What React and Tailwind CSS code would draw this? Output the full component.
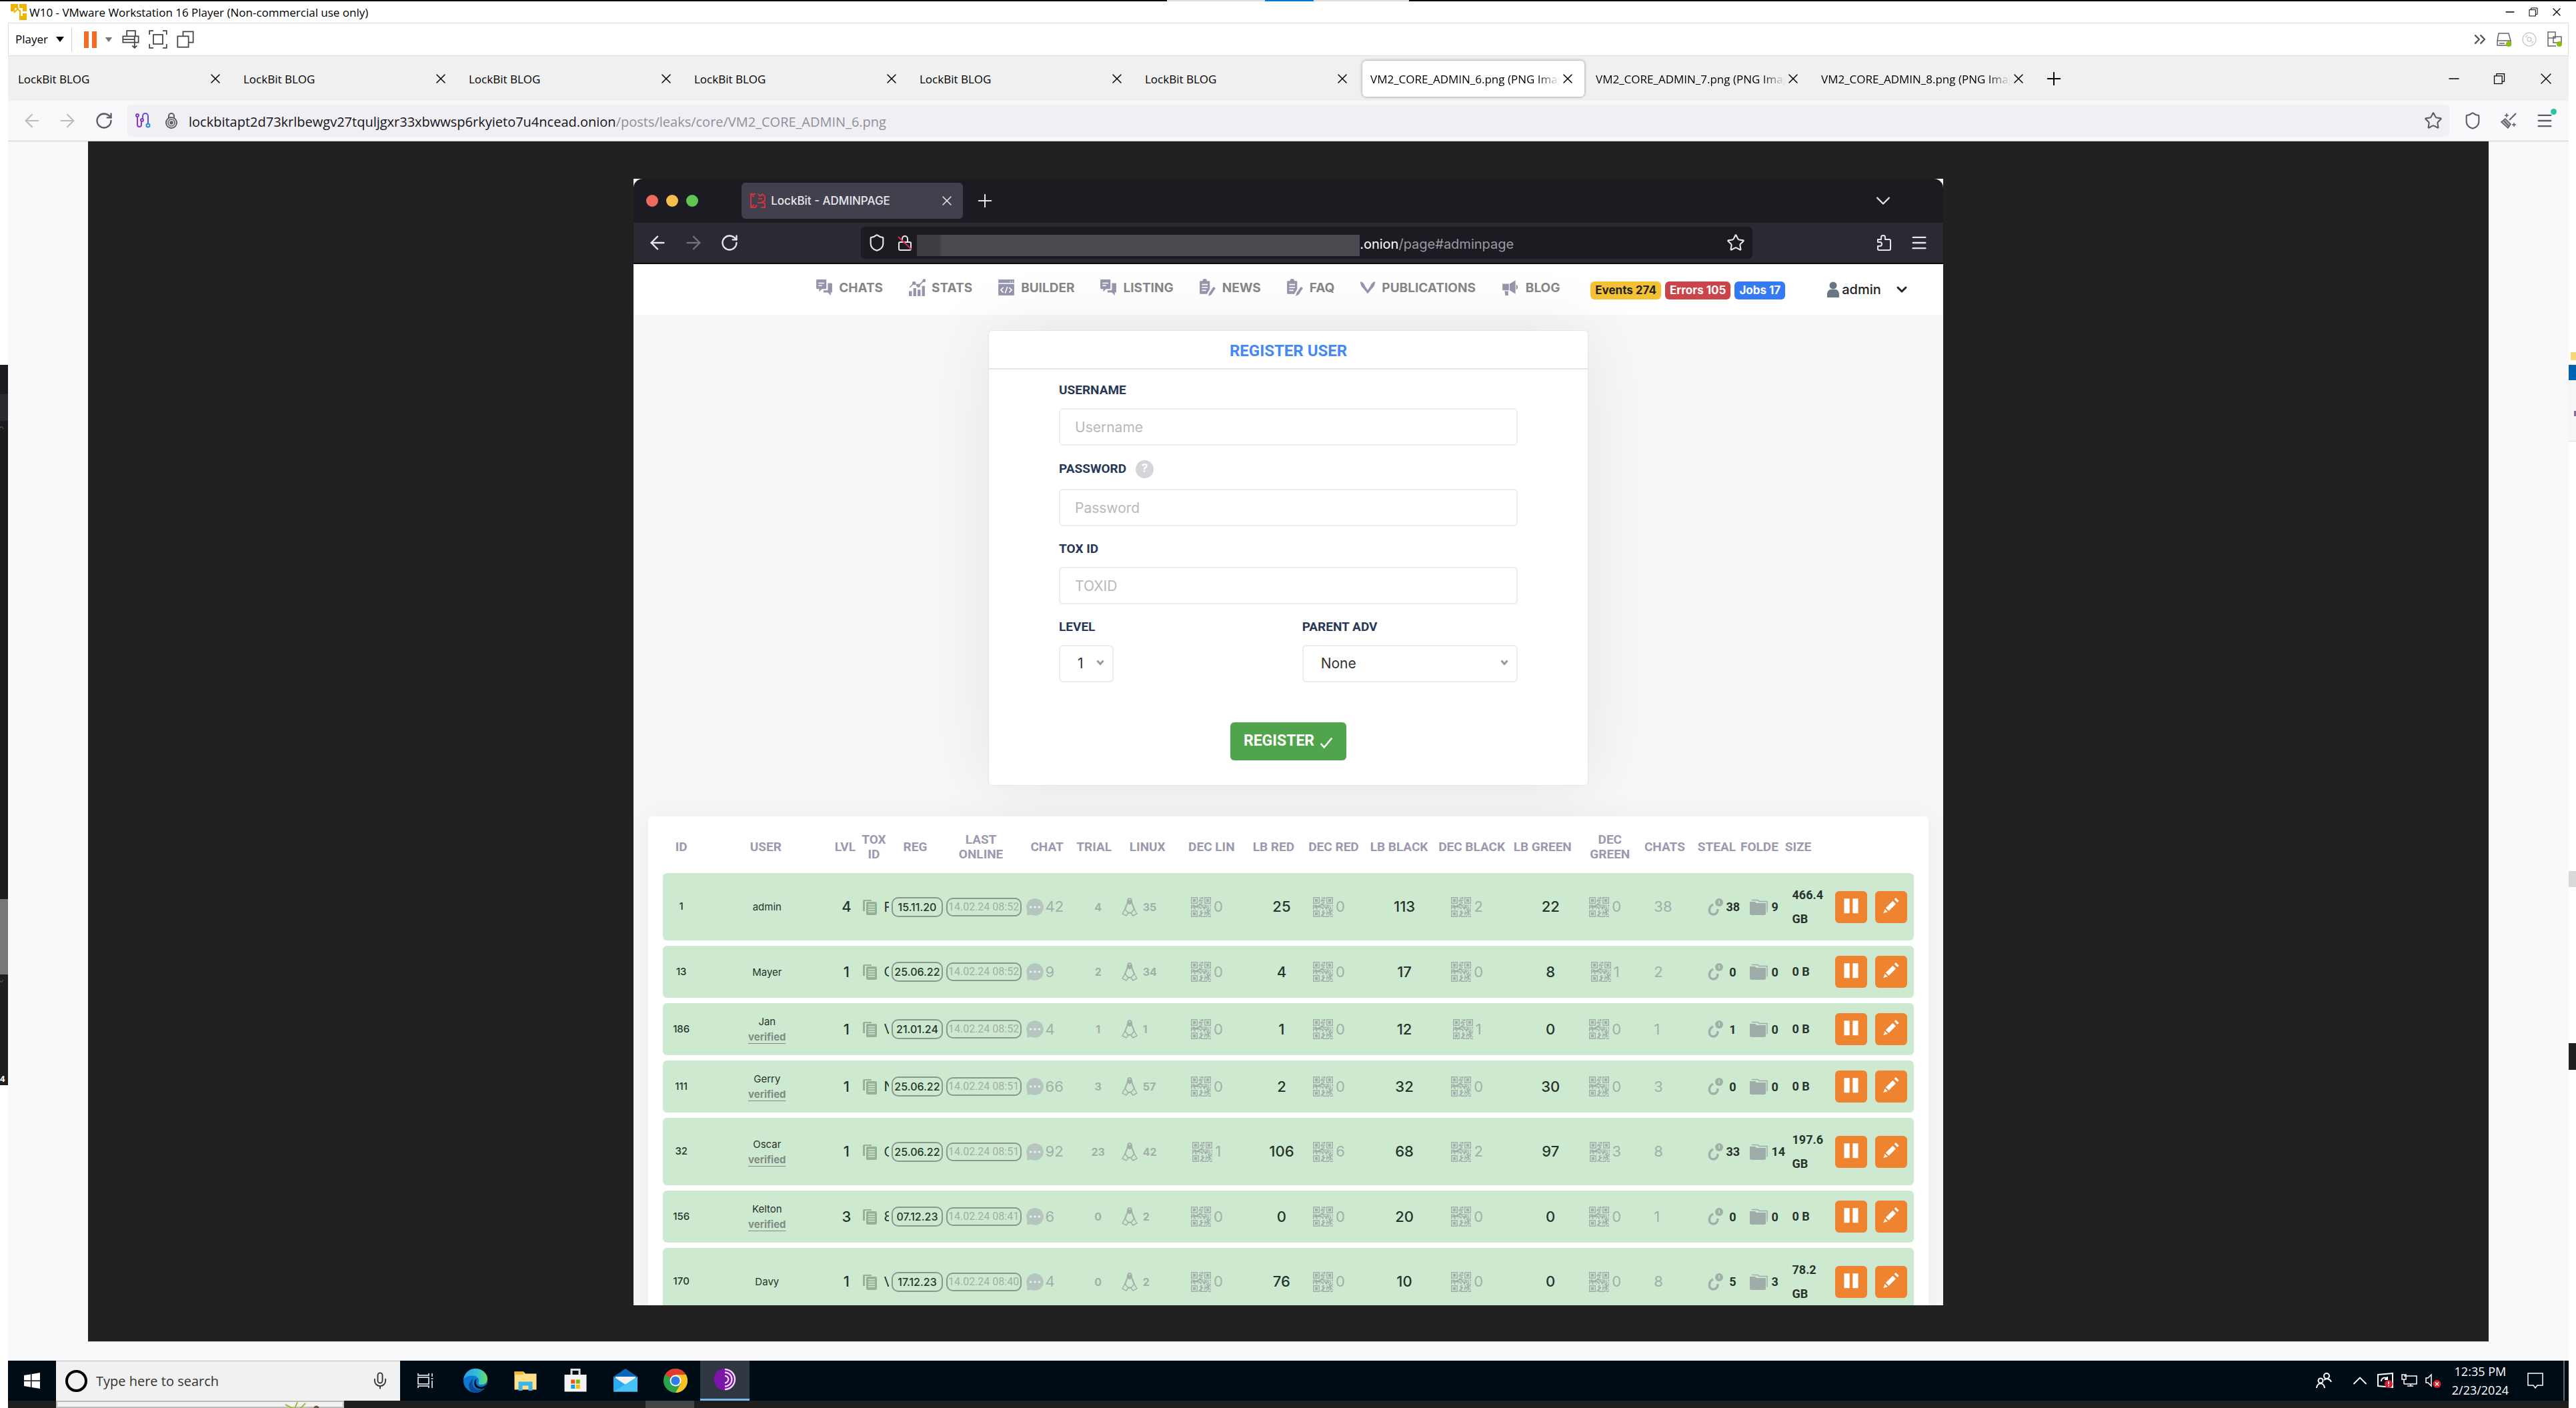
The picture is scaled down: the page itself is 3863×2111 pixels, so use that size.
import React from "react";
import {
  Star, Shield, RotateCw, ArrowLeft, ArrowRight, X, Plus, Minus, Menu,
  ChevronDown, ChevronUp, ChevronsRight, Mic,
} from "lucide-react";

const S = ({ className, vb = "0 0 24 24", children }) => (
  <svg className={className} viewBox={vb} fill="none" stroke="currentColor" strokeWidth="1.5" aria-hidden="true">
    {children}
  </svg>
);

/* ---------- window chrome icons ---------- */
const VmLogo = () => (
  <S className="size-6 text-[#f0b400]">
    <path d="M1 4V1h9v4H5v5H1zM14 1h9v9h-4V5h-5zM19 15h4v8h-9v-4h5zM5 13l7-7M9 6l6 6M14 9v11" fill="currentColor" stroke="currentColor" strokeWidth="2" />
  </S>
);
const Restore = ({ className }) => (
  <S className={className}>
    <rect x="3" y="7" width="14" height="14" />
    <path d="M7 7V3h14v14h-4" />
  </S>
);
const SendKeys = () => (
  <S className="h-7 w-7 text-[#444]">
    <path d="M7 1h11v7H7zM2 8h20v8H2zM2 12h15M17 8v15M14 20l3 3 3-3" />
  </S>
);
const FullScreen = () => (
  <S className="h-7 w-7 text-[#444]">
    <path d="M6 1H1v5M18 1h5v5M6 23H1v-5M18 23h5v-5" />
    <rect x="6" y="6" width="12" height="12" />
  </S>
);
const Unity = () => (
  <S className="h-7 w-7 text-[#444]">
    <path d="M9 8V2h13v14h-6" />
    <rect x="2" y="8" width="14" height="14" />
  </S>
);
const Drive = () => (
  <S className="size-6 text-[#666]">
    <path d="M4 3h15l3 11v7H2v-7zM2 14h20M5 18h8" />
    <circle cx="19" cy="19" r="4" fill="#7ac70c" stroke="none" />
  </S>
);
const Disc = () => (
  <S className="size-6 text-[#ccc]">
    <circle cx="12" cy="12" r="10" />
    <circle cx="12" cy="12" r="3" />
    <path d="M6 9l3-3M15 18l3-3" />
  </S>
);
const Net = () => (
  <S className="size-6 text-[#666]">
    <path d="M2 1h11v9H2zM10 8h12v9H10zM2 10v12h12" />
    <circle cx="19" cy="19" r="4" fill="#7ac70c" stroke="none" />
  </S>
);
const Circuit = () => (
  <S className="size-6">
    <g stroke="#8a35c9" strokeWidth="2">
      <circle cx="3" cy="4" r="2" />
      <path d="M3 6v12a3 3 0 0 0 6 0v-5" />
      <circle cx="10" cy="11" r="2" />
    </g>
    <path d="M11 9V5a4 4 0 0 1 8 0v11" stroke="#5a55d6" strokeWidth="2" />
    <circle cx="19" cy="19" r="2.500" stroke="#2a8bd0" strokeWidth="2" />
  </S>
);
const OnionLock = () => (
  <S className="size-6 text-[#5b5b66]">
    <path d="M8 8V5a4 4 0 0 1 8 0v3" strokeWidth="2" />
    <circle cx="12" cy="15" r="8" strokeWidth="2" />
    <circle cx="12" cy="15" r="5" />
    <circle cx="12" cy="15" r="2" fill="currentColor" />
  </S>
);
const Broom = () => (
  <S className="size-6 text-[#5b5b66]">
    <path d="M23 1L13 11" strokeWidth="2" />
    <path d="M7 9l8 8-4 6L1 14zM5 12l7 8" fill="currentColor" fillOpacity="0.5" />
    <path d="M9 1v6M6 4h6M20 15v6M17 18h6" />
  </S>
);
const PuzzleIcon = () => (
  <S className="size-6">
    <path d="M3 7h5V4a3 3 0 0 1 6 0v3h6a2 2 0 0 1 2 2v12a2 2 0 0 1-2 2H5a2 2 0 0 1-2-2v-4h3a3 3 0 0 0 0-6H3z" strokeWidth="2" strokeLinejoin="round" />
  </S>
);

/* ---------- admin page icons ---------- */
const ChatsIcon = () => (
  <S className="size-[26px] text-[#9594ad]">
    <path d="M2 1h12a1 1 0 0 1 1 1v11a1 1 0 0 1-1 1H9l-4 4v-4H2a1 1 0 0 1-1-1V2a1 1 0 0 1 1-1z" fill="currentColor" stroke="none" />
    <path d="M17 6h5a1 1 0 0 1 1 1v11a1 1 0 0 1-1 1h-1v4l-4-4h-6v-3h6z" fill="currentColor" stroke="none" />
    <path d="M4 6h8M4 9.500h5" stroke="#fff" />
  </S>
);
const StatsIcon = () => (
  <S className="size-[26px] text-[#9594ad]">
    <path d="M1 17h4v7H1zM7 13h4v11H7zM13 15h4v9h-4zM19 10h4v14h-4z" fill="currentColor" stroke="none" />
    <path d="M2 12l6-6 6 4 8-8" strokeWidth="1.500" />
    <circle cx="8" cy="6" r="1.800" fill="currentColor" />
    <circle cx="14" cy="9.500" r="1.800" fill="currentColor" />
    <circle cx="22" cy="2.500" r="1.500" fill="currentColor" />
  </S>
);
const BuilderIcon = () => (
  <S className="size-[26px] text-[#9594ad]">
    <path d="M1 1h22v22H1z" fill="currentColor" stroke="none" />
    <path d="M1 6.500h22M13.500 11l-3 9M8 12l-3.500 3.500L8 19M16 12l3.500 3.500L16 19M17 4h1M20 4h1" stroke="#fff" />
  </S>
);
const NewsIcon = () => (
  <S className="size-[26px] text-[#9594ad]">
    <path d="M2 3h3a3 3 0 0 1 6 0h3a1 1 0 0 1 1 1v10l-4 7H2a1 1 0 0 1-1-1V4a1 1 0 0 1 1-1z" fill="currentColor" stroke="none" />
    <path d="M4 8h8M4 12h8M4 16h6" stroke="#fff" />
    <path d="M20 11l3 2-6 9-4 2 1-4z" fill="currentColor" stroke="none" />
  </S>
);
const PubIcon = () => (
  <S className="size-6 text-[#9594ad]">
    <path d="M1 3c4 1 6 4 7 7l6 9-2 2-7-8C2 10 1 7 1 3z" fill="currentColor" stroke="none" />
    <path d="M23 3c-4 1-6 4-7 7l-6 9 2 2 7-8c3-3 4-6 4-10z" fill="currentColor" stroke="none" />
  </S>
);
const BlogIcon = () => (
  <S className="h-[26px] w-7 text-[#9594ad]">
    <path d="M1 7h9v9H1zM11 7l8-5v19l-8-5zM20 8c3 1 3 6 0 7zM4 17h5v6H5z" fill="currentColor" stroke="none" />
  </S>
);
const UserIcon = () => (
  <S className="h-6 w-5 text-[#6b7684]" vb="0 0 20 24">
    <circle cx="10" cy="6" r="5.500" fill="currentColor" stroke="none" />
    <path d="M1 24v-5c0-4 3-7 5-7h8c2 0 5 3 5 7v5z" fill="currentColor" stroke="none" />
  </S>
);
const BrandHex = () => (
  <S className="size-6 text-[#d0323f]">
    <path d="M9 2H2v20h8M2 2l5 4M2 22l5-4M13 2l3 3 3-3 4 3v7l-4 2 4 2v6h-6M13 9h6M12 15h7M10 18v4" strokeWidth="2" />
  </S>
);
const CopyStack = () => (
  <S className="size-6 text-[#95b198]">
    <path d="M1 18V3a2 2 0 0 1 2-2h11v2H4v15z" fill="currentColor" stroke="none" />
    <rect x="6" y="4" width="16" height="20" rx="2" fill="currentColor" stroke="none" />
    <path d="M9 8.500h10M9 12h10M9 15.500h10M9 19h10" stroke="#cdead1" />
  </S>
);
const Bubble = () => (
  <S className="size-7 shrink-0 text-[#b5c5bf]">
    <circle cx="12" cy="12" r="11" fill="currentColor" stroke="none" />
    <path d="M2 14v9l9-2z" fill="currentColor" stroke="none" />
    <g fill="#e4f3e6" stroke="none">
      <circle cx="6.500" cy="12" r="1.500" />
      <circle cx="12" cy="12" r="1.500" />
      <circle cx="17.500" cy="12" r="1.500" />
    </g>
  </S>
);
const Penguin = () => (
  <S className="h-7 w-6 text-[#a1aea9]" vb="0 0 24 28">
    <path d="M12 1C9.500 1 9 3 9 6c0 4-4 8-4 13 0 5 14 5 14 0 0-5-4-9-4-13 0-3-.5-5-3-5z" strokeWidth="2" />
    <path d="M9 3.500h6v5l-3 2-3-2z" fill="currentColor" stroke="none" />
    <path d="M5 17l-4 7 6 3 3-4zM19 17l4 7-6 3-3-4z" fill="#cdead1" />
  </S>
);
const Steal = () => (
  <S className="h-7 w-6 shrink-0 text-[#a1aea9]" vb="0 0 24 28">
    <circle cx="18" cy="7" r="6" fill="currentColor" stroke="none" />
    <path d="M18 4v5" stroke="#cdead1" />
    <path d="M9 10c-8 4-7 15 0 15 5 0 7-4 7-8" strokeWidth="3.500" />
  </S>
);
const Folders = () => (
  <S className="h-6 w-7 shrink-0 text-[#9fadaa]" vb="0 0 28 24">
    <path d="M0 4h8l2 2h14v16a2 2 0 0 1-2 2H2a2 2 0 0 1-2-2z" fill="currentColor" stroke="none" />
    <path d="M3 1.500h9l2 2h12v16" />
  </S>
);

/* Module map of the QR glyph: three finder squares plus a scattered data pattern. */
const qrPath = (() => {
  const n = 21;
  let d = "";
  let seed = 7;
  const finder = (r, c) => {
    const y = r < 7 ? r : r - 14;
    const x = c < 7 ? c : c - 14;
    const ring = Math.max(Math.abs(x - 3), Math.abs(y - 3));
    return ring === 3 || ring <= 1;
  };
  for (let r = 0; r < n; r++) {
    for (let c = 0; c < n; c++) {
      seed = (seed * 1103 + 12347) % 65521;
      const corner = (r < 7 && (c < 7 || c >= 14)) || (r >= 14 && c < 7);
      const quiet = !corner && ((r < 8 && (c < 8 || c > 12)) || (r > 12 && c < 8));
      const on = corner ? finder(r, c) : !quiet && seed % 100 < 52;
      if (on) d += `M${c} ${r}h1v1h-1z`;
    }
  }
  return d;
})();
const QrIcon = () => (
  <svg className="size-[30px] shrink-0" viewBox="0 0 21 21" fill="currentColor" aria-hidden="true"><path d={qrPath} /></svg>
);
const Caret = () => (
  <svg className="pointer-events-none absolute top-[22px] right-[14px] h-[9px] w-3" viewBox="0 0 12 9" fill="none" stroke="#999" strokeWidth="3" aria-hidden="true"><path d="M1.500 1.500L6 6.500l4.500-5" /></svg>
);

/* ---------- shared pieces ---------- */
const IconButton = ({ label, className = "", children }) => (
  <button type="button" aria-label={label} className={`flex items-center justify-center ${className}`}>{children}</button>
);

const tabs = [
  "LockBit BLOG", "LockBit BLOG", "LockBit BLOG", "LockBit BLOG", "LockBit BLOG", "LockBit BLOG",
  "VM2_CORE_ADMIN_6.png (PNG Image)", "VM2_CORE_ADMIN_7.png (PNG Image)", "VM2_CORE_ADMIN_8.png (PNG Image)",
];

const nav = [
  ["CHATS", ChatsIcon], ["STATS", StatsIcon], ["BUILDER", BuilderIcon], ["LISTING", ChatsIcon],
  ["NEWS", NewsIcon], ["FAQ", NewsIcon], ["PUBLICATIONS", PubIcon], ["BLOG", BlogIcon],
];

const columns = [
  ["ID", "w-[55px]"], ["USER", "w-[198px]"], ["LVL", "w-[40px]"], ["TOX ID", "w-[46px]"], ["REG", "w-[82px] pr-1"],
  ["LAST ONLINE", "w-[119px] pr-6 pl-4"], ["CHAT", "w-[71px]"], ["TRIAL", "w-[74px] pr-1"], ["LINUX", "w-[82px]"],
  ["DEC LIN", "w-[110px]"], ["LB RED", "w-[84px] pr-2"], ["DEC RED", "w-[88px]"], ["LB BLACK", "w-[108px]"],
  ["DEC BLACK", "w-[110px]"], ["LB GREEN", "w-[110px] pr-2"], ["DEC GREEN", "w-[84px]"], ["CHATS", "w-[84px] pr-1"],
  ["STEAL", "w-[68px]"], ["FOLDE", "w-[64px] pr-1"], ["SIZE", "w-[72px] pr-6"], ["", "w-[125px]"],
];

const users = [
  [1, "admin", 0, 4, "F", "15.11.20", "14.02.24 08:52", 42, 4, 35, 0, 25, 0, 113, 2, 22, 0, 38, 38, 9, "466.4 GB"],
  [13, "Mayer", 0, 1, "C", "25.06.22", "14.02.24 08:52", 9, 2, 34, 0, 4, 0, 17, 0, 8, 1, 2, 0, 0, "0 B"],
  [186, "Jan", 1, 1, "V", "21.01.24", "14.02.24 08:52", 4, 1, 1, 0, 1, 0, 12, 1, 0, 0, 1, 1, 0, "0 B"],
  [111, "Gerry", 1, 1, "N", "25.06.22", "14.02.24 08:51", 66, 3, 57, 0, 2, 0, 32, 0, 30, 0, 3, 0, 0, "0 B"],
  [32, "Oscar", 1, 1, "C", "25.06.22", "14.02.24 08:51", 92, 23, 42, 1, 106, 6, 68, 2, 97, 3, 8, 33, 14, "197.6 GB"],
  [156, "Kelton", 1, 3, "8", "07.12.23", "14.02.24 08:41", 6, 0, 2, 0, 0, 0, 20, 0, 0, 0, 1, 0, 0, "0 B"],
  [170, "Davy", 0, 1, "V", "17.12.23", "14.02.24 08:40", 4, 0, 2, 0, 76, 0, 10, 0, 0, 0, 8, 5, 3, "78.2 GB"],
];

const Qr = ({ n }) => (
  <td className="pr-[14px]">
    <div className="flex items-center justify-center gap-1 text-[22px] text-[#a1aea9]">
      <QrIcon />
      <span>{n}</span>
    </div>
  </td>
);
const Big = ({ n }) => <td className="pl-4 text-center text-[22px] font-medium text-[#26332c]">{n}</td>;

function UserRow({ u }) {
  const [id, name, ver, lvl, tox, reg, last, chat, trial, linux, dl, lr, dr, lb, db, lg, dg, chats, steal, folder, size] = u;
  return (
    <tr className={`[&>td]:bg-[#cdead1] ${size.endsWith("GB") ? "h-[101px]" : "h-[78px]"}`}>
      <td className="rounded-l-md text-center text-[15px] font-medium text-[#26332c]">{id}</td>
      <td className="pl-1 text-center text-[15px] leading-[23px] text-[#26332c]">
        <div>{name}</div>
        {ver ? <a href="#verified" className="font-bold text-[#808c84] underline underline-offset-4">verified</a> : null}
      </td>
      <td className="pl-1 text-center text-[22px] font-medium text-[#26332c]">{lvl}</td>
      <td>
        <div className="flex items-center gap-2 overflow-hidden pl-[6px] text-[20px] text-[#26332c]">
          <IconButton label={`Copy TOX ID of ${name}`} className="shrink-0"><CopyStack /></IconButton>
          <span className="w-2 shrink-0 overflow-hidden">{tox}</span>
        </div>
      </td>
      <td className="pr-[2px] pl-1">
        <div className="flex h-[30px] items-center justify-center rounded-[10px] border-2 border-[#89998d] text-[16px] font-medium whitespace-nowrap text-[#26332c]">{reg}</div>
      </td>
      <td className="px-[3px]">
        <div className="flex h-7 items-center justify-center rounded-[10px] border-2 border-[#89998d] font-[Roboto,sans-serif] text-[16px] whitespace-nowrap text-[#a1aea9]">{last}</div>
      </td>
      <td>
        <div className="flex items-center gap-[2px] pl-[3px] text-[22px] text-[#a1aea9]"><Bubble />{chat}</div>
      </td>
      <td className="pl-2 text-center text-[16px] font-bold text-[#a1aea9]">{trial}</td>
      <td>
        <div className="flex items-center gap-2 pl-[2px] text-[16px] leading-5 font-bold text-[#a1aea9]"><Penguin /><span>{linux}</span></div>
      </td>
      <Qr n={dl} />
      <Big n={lr} />
      <Qr n={dr} />
      <Big n={lb} />
      <Qr n={db} />
      <Big n={lg} />
      <Qr n={dg} />
      <td className="pl-6 text-[22px] text-[#a1aea9]">{chats}</td>
      <td>
        <div className="flex items-center justify-between pl-5 font-[Roboto,sans-serif] text-[18px] font-bold text-[#26332c]"><Steal /><span className="w-5 text-center">{steal}</span></div>
      </td>
      <td>
        <div className="flex items-center gap-1 pl-4 font-[Roboto,sans-serif] text-[18px] font-bold text-[#26332c]"><Folders />{folder}</div>
      </td>
      <td className="pl-[15px] font-[Roboto,sans-serif] text-[18px] leading-9 font-bold text-[#26332c]">{size}</td>
      <td className="rounded-r-md">
        <div className="flex gap-3 pl-[7px]">
          <IconButton label={`Pause ${name}`} className="size-12 rounded-md bg-[#ee842f]">
            <S className="size-7 text-white"><path d="M3 1h7v19H3zM14 1h7v19h-7z" fill="currentColor" stroke="none" /></S>
          </IconButton>
          <IconButton label={`Edit ${name}`} className="size-12 rounded-md bg-[#ee842f]">
            <S className="size-7 text-white">
              <path d="M14 4l4 4L9 17l-4-4zM16 2l2-2 4 4-2 2zM4 14.500l3.500 3.500L2 20z" fill="currentColor" stroke="none" />
            </S>
          </IconButton>
        </div>
      </td>
    </tr>
  );
}

const label = "font-[Roboto,sans-serif] text-[19px] leading-[22px] font-bold text-[#273857]";
const field = "h-14 w-full rounded-md border-2 border-[#ececef] bg-white text-[21px] text-[#333] placeholder:text-[#b9b9b9]";

function RegisterCard() {
  return (
    <section className="mx-auto mt-[23px] w-full max-w-[900px] rounded-md border border-[#e3e4f0] bg-white shadow-[0_0_110px_rgba(0,0,0,0.08)]">
      <h1 className="border-b-2 border-[#e3e4f0] pt-4 pb-3 text-center font-[Roboto,sans-serif] text-[24px] leading-7 font-bold text-[#4488f5]">REGISTER USER</h1>
      <form className="px-[105px] pt-5 pb-[37px]">
        <div className="mb-[23px]">
          <label htmlFor="username" className={`${label} mb-4 block`}>USERNAME</label>
          <input id="username" placeholder="Username" className={`${field} pl-[22px]`} />
        </div>
        <div className="mb-[23px]">
          <div className="mb-[18px] flex h-6 items-center gap-[14px]">
            <label htmlFor="password" className={label}>PASSWORD</label>
            <button type="button" className="flex size-[27px] items-center justify-center rounded-full bg-[#d5d5da] text-[17px] font-bold text-white">?</button>
          </div>
          <input id="password" type="password" placeholder="Password" className={`${field} pl-[22px]`} />
        </div>
        <div className="mb-[23px]">
          <label htmlFor="tox" className={`${label} mb-4 block`}>TOX ID</label>
          <input id="tox" placeholder="TOXID" className={`${field} pl-[22px]`} />
        </div>
        <div className="flex justify-between">
          <div>
            <label htmlFor="level" className={`${label} mb-4 block`}>LEVEL</label>
            <div className="relative w-[82px]">
              <select id="level" defaultValue="1" className={`${field} appearance-none pl-[26px]`}><option>1</option></select>
              <Caret />
            </div>
          </div>
          <div className="w-[47%]">
            <label htmlFor="parent" className={`${label} mb-4 block`}>PARENT ADV</label>
            <div className="relative">
              <select id="parent" defaultValue="None" className={`${field} appearance-none pl-[26px]`}><option>None</option></select>
              <Caret />
            </div>
          </div>
        </div>
        <button type="button" className="mx-auto mt-[60px] flex h-[57px] items-center gap-2 rounded-md bg-[#50a44c] px-5 font-[Roboto,sans-serif] text-[23px] font-bold text-white">
          REGISTER
          <S className="mt-1 size-5"><path d="M2 13l6 7L22 3" strokeWidth="3" /></S>
        </button>
      </form>
    </section>
  );
}

function AdminWindow() {
  return (
    <div className="mx-auto mt-14 aspect-[1964/1689] w-6/11 overflow-hidden bg-[#f7f7f7] font-[Inter,sans-serif]">
      <div className="flex h-[66px] items-center rounded-t-[14px] bg-[#1c1b22] px-[19px] text-[#e8e8ec]">
        <div className="mr-[65px] flex gap-3">
          <span className="size-[18px] rounded-full bg-[#ec6a5e]" />
          <span className="size-[18px] rounded-full bg-[#f5bf4f]" />
          <span className="size-[18px] rounded-full bg-[#61c554]" />
        </div>
        <div className="flex h-[54px] w-[332px] items-center gap-2 rounded-md bg-[#42404c] px-3">
          <BrandHex />
          <span className="flex-1 pt-[2px] text-[17px] font-medium">LockBit - ADMINPAGE</span>
          <IconButton label="Close tab"><X className="size-6" strokeWidth={1.5} /></IconButton>
        </div>
        <IconButton label="New tab" className="ml-[17px]"><Plus className="size-8" strokeWidth={1.5} /></IconButton>
        <IconButton label="List all tabs" className="mr-[53px] ml-auto"><ChevronDown className="size-9" strokeWidth={1.5} /></IconButton>
      </div>
      <div className="flex h-[62px] items-center border-b-2 border-[#0c0c0d] bg-[#2b2a33] pr-[22px] pl-5 text-[#e8e8ec]">
        <IconButton label="Back"><ArrowLeft className="size-8" strokeWidth={1.8} /></IconButton>
        <IconButton label="Forward" className="ml-[22px] text-[#72717a]"><ArrowRight className="size-8" strokeWidth={1.8} /></IconButton>
        <IconButton label="Reload" className="ml-6"><RotateCw className="size-7" strokeWidth={2} /></IconButton>
        <div className="mr-[185px] ml-[183px] flex h-12 flex-1 items-center rounded-md bg-[#1c1b22] pr-[11px] pl-[10px]">
          <Shield className="size-7" strokeWidth={1.8} />
          <S className="ml-4 size-6">
            <rect x="3" y="11" width="18" height="12" rx="2" strokeWidth="2" />
            <path d="M8 11V6a4 4 0 0 1 8 0v5" strokeWidth="2" />
            <path d="M2 3l20 19" stroke="#e22850" strokeWidth="2" />
          </S>
          <span className="mt-2 ml-[6px] h-8 w-[36px] bg-[#3f3e45]" />
          <span className="mt-2 h-8 w-[628px] bg-[#4b4a50]" />
          <span className="pt-1 text-[20px] text-[#9b9aa2]"><span className="text-white">.onion</span>/page#adminpage</span>
          <IconButton label="Bookmark" className="ml-auto"><Star className="size-7" strokeWidth={1.8} /></IconButton>
        </div>
        <IconButton label="Extensions"><PuzzleIcon /></IconButton>
        <IconButton label="Menu" className="ml-[27px]"><Menu className="size-7" strokeWidth={2} /></IconButton>
      </div>
      <header className="flex h-[76px] items-center bg-white pr-[50px] pb-1 pl-[273px]">
        <nav className="flex gap-[38px] pb-[2px]">
          {nav.map(([t, I]) => (
            <a key={t} href={`#${t.toLowerCase()}`} className="flex items-center gap-[9px] text-[19px] font-bold text-[#858588]"><I /><span className="pt-[2px]">{t}</span></a>
          ))}
        </nav>
        <div className="ml-auto flex gap-[6px] pt-[6px] text-[17px] leading-[27px] font-bold text-white">
          <span className="rounded-md bg-[#f4c132] px-[7px] text-[#222]">Events 274</span>
          <span className="rounded-md bg-[#cb444a] px-[7px]">Errors 105</span>
          <span className="rounded-md bg-[#347af6] px-[7px]">Jobs 17</span>
        </div>
        <button type="button" className="ml-[62px] flex items-center gap-[3px] pt-1 text-[20px] font-medium text-[#222]">
          <UserIcon />admin<ChevronDown className="ml-4 size-6" strokeWidth={3} />
        </button>
      </header>
      <RegisterCard />
      <section className="mx-[22px] mt-[46px] rounded-t-md bg-white px-[22px] shadow-[0_0_40px_rgba(0,0,0,0.05)]">
        <table className="w-full table-fixed border-separate border-spacing-x-0 border-spacing-y-2">
          <thead>
            <tr className="h-[69px]">
              {columns.map(([c, w], i) => (
                <th key={i} className={`${w} pt-[6px] pb-0 text-center font-[Roboto,sans-serif] text-[19px] leading-[22px] font-bold text-[#9a99ae]`}>{c}</th>
              ))}
            </tr>
          </thead>
          <tbody>{users.map((u) => <UserRow key={u[0]} u={u} />)}</tbody>
        </table>
      </section>
    </div>
  );
}

/* ---------- taskbar ---------- */
const EdgeIcon = () => (
  <S className="size-9">
    <defs>
      <linearGradient id="edgeTop" x1="0" x2="1"><stop offset="0" stopColor="#2a9fe0" /><stop offset=".6" stopColor="#35c1d8" /><stop offset="1" stopColor="#6be04f" /></linearGradient>
    </defs>
    <g stroke="none">
      <circle cx="12" cy="12" r="12" fill="#0c78d4" />
      <path d="M0 11C1 4 6 0 12 0c7 0 12 5 12 10 0 4-3 6-6 6-2 0-4-1-3-2 2-4-2-7-6-7-5 0-8 2-9 4z" fill="url(#edgeTop)" />
      <path d="M10 10c-3 5 0 11 6 11 3 0 5-1 6-3-3 5-9 7-14 5-4-4-3-10 2-13z" fill="#0b4a94" />
      <path d="M13 10c-1 3-1 7 3 8 3 1 6-1 8-3l-1 3c-2 2-4 3-7 2-5 0-7-7-3-10z" fill="#000c15" />
    </g>
  </S>
);
const ExplorerIcon = () => (
  <S className="size-9">
    <g stroke="none">
      <path d="M1 3h9l2 2h11v16H1z" fill="#ffe08a" />
      <path d="M1 3h9v3H1z" fill="#f5ba2c" />
      <path d="M5 13h14v9h-4v-5H9v5H5z" fill="#3cb4e7" />
    </g>
  </S>
);
const StoreIcon = () => (
  <S className="size-9">
    <path d="M8 7V1h8v6" stroke="#ddd" strokeWidth="2" />
    <g stroke="none">
      <path d="M1 6h22v17H1z" fill="#f3f3f3" />
      <path d="M7.500 11h4v4h-4z" fill="#f25022" /><path d="M12.500 11h4v4h-4z" fill="#7fba00" />
      <path d="M7.500 16h4v4h-4z" fill="#00a4ef" /><path d="M12.500 16h4v4h-4z" fill="#ffb900" />
    </g>
  </S>
);
const MailIcon = () => (
  <S className="size-9">
    <g stroke="none">
      <path d="M0 8l12-8 12 8v5H0z" fill="#0a66b8" />
      <path d="M2 8h20v9H2z" fill="#f2f2f2" />
      <path d="M0 8l12 8 12-8v15H0z" fill="#2ea8ee" />
      <path d="M0 23L24 8v15z" fill="#46c2f5" />
    </g>
  </S>
);
const ChromeIcon = () => (
  <S className="size-9">
    <g stroke="none">
      <circle cx="12" cy="12" r="12" fill="#2ba24c" />
      <path d="M12 12L1.600 6A12 12 0 0 1 22.400 6z" fill="#e33b2e" />
      <path d="M12 6h10.400A12 12 0 0 1 12 24l5.200-9z" fill="#fcc31e" />
      <circle cx="12" cy="12" r="5.600" fill="#fff" />
      <circle cx="12" cy="12" r="4.400" fill="#2f7de9" />
    </g>
  </S>
);
const TorIcon = () => (
  <S className="size-9">
    <circle cx="12" cy="12" r="11" fill="#7b16a8" stroke="none" />
    <path d="M12 5a7 7 0 0 1 0 14M12 2a10 10 0 0 1 0 20M12 8.500a3.500 3.500 0 0 1 0 7" stroke="#f0e0f5" />
  </S>
);
const apps = [["Edge", EdgeIcon], ["File Explorer", ExplorerIcon], ["Microsoft Store", StoreIcon], ["Mail", MailIcon], ["Chrome", ChromeIcon], ["Tor Browser", TorIcon]];

function Taskbar() {
  return (
    <footer className="flex h-[60px] items-stretch bg-[#000c15] text-white">
      <IconButton label="Start" className="w-[72px]">
        <S className="size-6"><path d="M0 4l10-1.500v9H0zM11.500 2.200L24 0v11.500H11.500zM0 13h10v8.700L0 20zM11.500 13H24v11l-12.500-2z" fill="currentColor" stroke="none" /></S>
      </IconButton>
      <label className="flex w-[516px] items-center border-t border-[#bbb] bg-[#f1f1f1] pr-4 pl-[14px] text-[#333]">
        <span className="size-[33px] shrink-0 rounded-full border-4 border-black" />
        <input placeholder="Type here to search" className="ml-[13px] min-w-0 flex-1 pt-[2px] text-[20px] placeholder:text-[#333]" />
        <Mic className="size-7" strokeWidth={1.6} />
      </label>
      <IconButton label="Task view" className="w-[75px]">
        <S className="size-6"><path d="M1 1v3h16V1M1 23v-3h16v3M1 7h16v10H1zM22 1v5M22 12v11M20.500 9h3" /></S>
      </IconButton>
      {apps.map(([n, I]) => (
        <IconButton key={n} label={n} className={n === "Tor Browser" ? "w-[74px] border-b-[3px] border-[#76b9ed] bg-[#2f3841]" : "w-[75px]"}><I /></IconButton>
      ))}
      <div className="ml-auto flex items-center">
        <IconButton label="People">
          <S className="size-6"><circle cx="16" cy="5" r="4" strokeWidth="2" /><circle cx="7" cy="12" r="3.500" strokeWidth="2" /><path d="M12 11c4-3 9-2 11 3M1 23c1-9 11-9 12 0" strokeWidth="2" /></S>
        </IconButton>
        <IconButton label="Show hidden icons" className="ml-6"><ChevronUp className="size-9" strokeWidth={1.2} /></IconButton>
        <S className="ml-2 size-6"><path d="M1 3l22-2v21L1 20z" strokeWidth="2" /><path d="M6 13c0-6 8-7 9-3M15 6v4h-4" strokeWidth="2" /><circle cx="17" cy="17" r="6" fill="#d9202a" stroke="none" /><path d="M17 13.500v4M17 19v1.500" strokeWidth="2" /></S>
        <S className="ml-3 size-6"><path d="M4 5h19v12H4M14 17v3M9 20h9M1 3h6v7H1zM4 10v7" /></S>
        <S className="ml-3 size-6"><path d="M1 8h3l5-5v17l-5-5H1z" /><circle cx="17.500" cy="17" r="6" fill="#d9202a" stroke="none" /><path d="M15 14.500l5 5M20 14.500l-5 5" /></S>
        <div className="ml-4 text-center text-[18px] leading-7">
          <div>12:35 PM</div>
          <div>2/23/2024</div>
        </div>
        <IconButton label="Notifications" className="mr-[30px] ml-7"><S className="size-6"><path d="M1 1h22v18h-8l-3 4-3-4H1z" /></S></IconButton>
        <span className="mr-[6px] h-full w-[2px] self-stretch bg-[#666]" />
      </div>
    </footer>
  );
}

export default function App() {
  return (
    <div className="min-h-screen overflow-hidden bg-white font-['Open_Sans',sans-serif] text-black">
      <div className="flex h-[2px] bg-black">
        <span className="ml-[45.3%] w-[3.8%] bg-[#ddd]" />
        <span className="w-[1.9%] bg-[#0078d7]" />
        <span className="w-[3.7%] bg-[#ddd]" />
      </div>
      <div className="flex h-8 items-center pr-[19px] pl-4">
        <VmLogo />
        <span className="ml-1 pt-[2px] text-[17px]">W10 - VMware Workstation 16 Player (Non-commercial use only)</span>
        <div className="ml-auto flex items-center gap-[17px]">
          <IconButton label="Minimize"><Minus className="size-5" strokeWidth={2} /></IconButton>
          <IconButton label="Restore"><Restore className="size-4" /></IconButton>
          <IconButton label="Close"><X className="size-5" strokeWidth={1.5} /></IconButton>
        </div>
      </div>
      <div className="flex">
        <div className="w-3 shrink-0 overflow-hidden">
          <div className="mt-[513px] h-11 bg-[#1c1b22]" />
          <div className="h-10 bg-[#2b2a33]" />
          <div className="h-[717px] bg-[#1c1c1e] pt-1"><ChevronUp className="-ml-1 size-3 text-[#777]" /></div>
          <div className="h-[113px] bg-[#777]" />
          <div className="flex h-[166px] flex-col justify-between bg-[#1f1f1f] pt-1 pb-[2px] text-[13px] leading-4 font-bold text-white"><ChevronDown className="-ml-1 size-3 text-[#777]" /><span>4</span></div>
        </div>
        <main className="min-w-0 flex-1">
          <div className="flex h-[50px] items-center border border-[#ddd] pr-2 pl-[10px] text-[17px]">
            <button type="button" className="flex items-center gap-3">Player<svg className="h-2 w-3" viewBox="0 0 12 8"><path d="M0 0h12L6 8z" /></svg></button>
            <span className="ml-[11px] h-[35px] w-px bg-[#ccc]" />
            <IconButton label="Suspend" className="ml-[18px] gap-[5px]"><span className="h-[25px] w-[7px] bg-[#f26b21]" /><span className="h-[25px] w-[7px] bg-[#f26b21]" /></IconButton>
            <IconButton label="Power options" className="ml-3"><svg className="h-[7px] w-3" viewBox="0 0 12 8" fill="#777"><path d="M0 0h12L6 8z" /></svg></IconButton>
            <div className="ml-[13px] flex gap-[13px]">
              <IconButton label="Send keys"><SendKeys /></IconButton>
              <IconButton label="Full screen"><FullScreen /></IconButton>
              <IconButton label="Unity"><Unity /></IconButton>
            </div>
            <div className="ml-auto flex items-center gap-[14px]">
              <ChevronsRight className="-mr-1 size-7 text-[#555]" strokeWidth={2} /><Drive /><Disc /><Net />
            </div>
          </div>
          <div className="flex h-[67px] items-center gap-[5px] bg-[#f0f0f0] pl-[3px]">
            {tabs.map((t, i) => (
              <div key={i} className={`flex h-[54px] w-[333px] shrink-0 items-center justify-between rounded-md pr-[13px] pl-3 text-[17px] ${i === 6 ? "bg-white shadow-[0_0_4px_rgba(0,0,0,0.4)]" : ""}`}>
                <span className={`min-w-0 overflow-hidden pt-[2px] whitespace-nowrap ${i > 5 ? "[mask-image:linear-gradient(to_right,black_88%,transparent)]" : ""}`}>{t}</span>
                <IconButton label="Close tab" className="shrink-0"><X className="size-6" strokeWidth={1.5} /></IconButton>
              </div>
            ))}
            <IconButton label="Open a new tab" className="ml-[7px]"><Plus className="size-8" strokeWidth={1.5} /></IconButton>
            <div className="mr-5 ml-auto flex items-center gap-[46px]">
              <IconButton label="Minimize browser"><Minus className="size-6" strokeWidth={1.5} /></IconButton>
              <IconButton label="Restore browser"><Restore className="size-5" /></IconButton>
              <IconButton label="Close browser"><X className="size-7" strokeWidth={1.2} /></IconButton>
            </div>
          </div>
          <div className="flex h-[61px] items-center border-b border-[#ccc] bg-[#f9f9fb] pr-[22px] pl-5 text-[#5b5b66]">
            <IconButton label="Back" className="text-[#bbb]"><ArrowLeft className="size-8" strokeWidth={1.6} /></IconButton>
            <IconButton label="Forward" className="ml-[21px] text-[#bbb]"><ArrowRight className="size-8" strokeWidth={1.6} /></IconButton>
            <IconButton label="Reload" className="ml-[25px]"><RotateCw className="size-7" strokeWidth={2} /></IconButton>
            <div className="ml-[21px] flex h-12 flex-1 items-center rounded-md bg-[#f0eff4] pr-[10px] pl-3">
              <Circuit />
              <span className="ml-[18px]"><OnionLock /></span>
              <span className="ml-[14px] pt-[3px] text-[20px] text-[#8f8f9a]"><span className="text-[#15141a]">lockbitapt2d73krlbewgv27tquljgxr33xbwwsp6rkyieto7u4ncead.onion</span>/posts/leaks/core/VM2_CORE_ADMIN_6.png</span>
              <IconButton label="Bookmark this page" className="ml-auto"><Star className="size-7" strokeWidth={1.8} /></IconButton>
            </div>
            <IconButton label="Security level" className="ml-[21px]"><Shield className="size-7" strokeWidth={1.8} /></IconButton>
            <IconButton label="New identity" className="ml-7"><Broom /></IconButton>
            <button type="button" aria-label="Menu" className="relative ml-7"><Menu className="size-7" strokeWidth={2} /><span className="absolute -top-1 -right-1 size-[9px] rounded-full bg-[#2ac3a2]" /></button>
          </div>
          <div className="bg-[#f9f9fb] px-[120px] pb-7">
            <div className="flow-root border-b border-[#ccc] bg-[#212121] pb-[54px]"><AdminWindow /></div>
          </div>
          <Taskbar />
          <div className="flex h-[11px] overflow-hidden bg-[#1e1e1e]">
            <div className="ml-[72px] flex w-[432px] justify-end border-2 border-[#bbb] bg-[#f1f1f1] pr-6">
              <S className="h-[10px] w-16" vb="0 0 64 10"><path d="M2 4l12 6M16 10L20 0M24 10L32 2" stroke="#9bbf2e" strokeWidth="2" /><path d="M44 10c1-6 8-6 9 0z" fill="#6b5344" stroke="none" /></S>
            </div>
            <div className="ml-[452px] w-[73px] bg-[#444]" />
          </div>
        </main>
        <div className="w-[11px] shrink-0 overflow-hidden">
          <div className="mt-[494px] ml-[3px] h-3 bg-[#f8d775]" />
          <div className="mt-[7px] h-[23px] bg-[#0063b1]" />
          <div className="h-[92px] border-b border-[#ddd] bg-[#f5f6f8] pt-[46px] pl-2"><div className="h-2 bg-[#8b6a9a]" /></div>
          <div className="mt-[644px] h-6 bg-[#d9d9d9]" />
          <div className="mt-[234px] h-10 bg-[#1f1f1f]" />
        </div>
      </div>
    </div>
  );
}
